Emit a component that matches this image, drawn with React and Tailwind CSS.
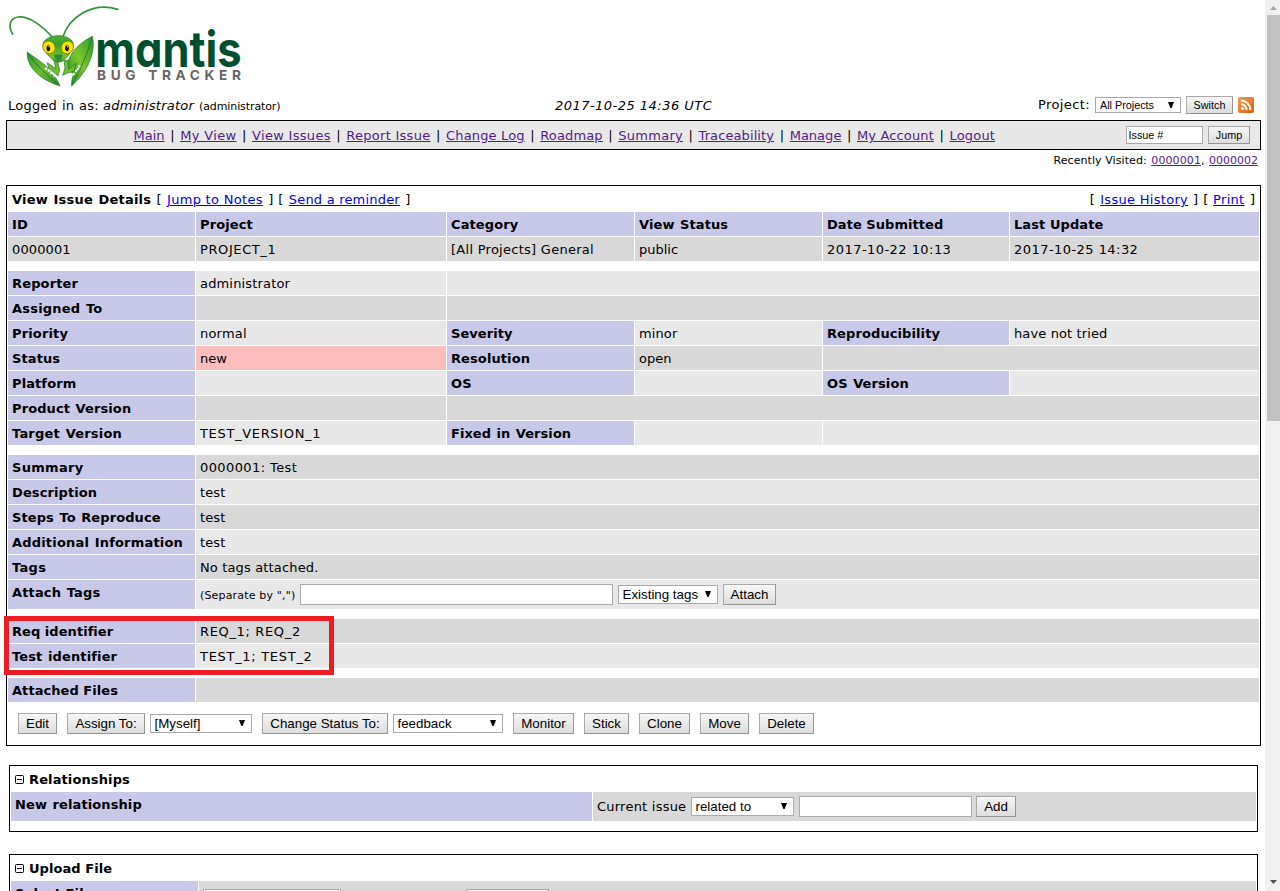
import React from "react";

const COLS = "grid grid-cols-[187px_250px_187px_187px_186px_249px] gap-px";
const D = "bg-[#d8d8d8]";
const L = "bg-[#e8e8e8]";
const C = "bg-[#c8c8e8]";

const SPAN = { 1: "col-span-1", 3: "col-span-3", 2: "col-span-2", 4: "col-span-4", 5: "col-span-5" };

function Cell({ bg, span = 1, t = "tracking-[0.12px]", children }) {
  return (
    <div className={`${bg} ${SPAN[span]} h-6 px-1 leading-[25px] whitespace-nowrap ${t}`}>
      {children}
    </div>
  );
}

function Label({ children, t = "tracking-[0.1px] [word-spacing:0.9px]" }) {
  return <Cell bg={C} t={`font-bold ${t}`}>{children}</Cell>;
}

function Button({ className = "", small, children }) {
  return (
    <button className={`shrink-0 border border-t-[#a9a9a9] border-l-[#a9a9a9] border-[#959595] bg-linear-to-b from-[#f6f6f6] to-[#dddddd] text-center whitespace-nowrap font-['Liberation_Sans',sans-serif] ${small ? "h-[18px] text-[10.8px] leading-[17px]" : "h-[21px] text-[13.333px] leading-[19px]"} ${className}`}>
      {children}
    </button>
  );
}

function Select({ className = "", small, children }) {
  return (
    <div className={`shrink-0 flex items-center justify-between border border-[#a9a9a9] bg-white pr-[6px] whitespace-nowrap font-['Liberation_Sans',sans-serif] ${small ? "h-[16px] text-[10.8px] leading-[14px] pl-1" : "h-[19px] text-[13.333px] leading-[17px] pl-[3.5px]"} ${className}`}>
      <span>{children}</span>
      <svg width="6" height="6" viewBox="0 0 6 6" className="shrink-0 -mt-px"><path d="M0 0h6L3.6 6H2.4z" fill="#000" /></svg>
    </div>
  );
}

function Input({ className = "" }) {
  return <div className={`shrink-0 border border-[#a9a9a9] bg-white ${className}`} />;
}

function Link({ children, visited, t = "" }) {
  return <a className={`underline ${t} ${visited ? "text-[#551a8b]" : "text-[#0000ee]"}`}>{children}</a>;
}

function Logo() {
  return (
    <svg width="260" height="90" viewBox="0 0 780 270" className="block">
      <defs>
        <linearGradient id="leaf" x1="0" y1="0" x2="1" y2="1">
          <stop offset="0" stopColor="#2c9636" />
          <stop offset="0.5" stopColor="#6dbb2b" />
          <stop offset="1" stopColor="#279034" />
        </linearGradient>
        <linearGradient id="leafRight" x1="1" y1="0" x2="0" y2="1">
          <stop offset="0" stopColor="#2c9636" />
          <stop offset="0.5" stopColor="#7cc62a" />
          <stop offset="1" stopColor="#1f8a30" />
        </linearGradient>
        <linearGradient id="head" x1="0" y1="0" x2="0" y2="1">
          <stop offset="0" stopColor="#4fae2f" />
          <stop offset="0.35" stopColor="#38a02f" />
          <stop offset="0.8" stopColor="#7cc62a" />
          <stop offset="1" stopColor="#2a8c32" />
        </linearGradient>
      </defs>
      <g fill="none" stroke="#2f9636" strokeLinecap="round">
        <path d="M158 113C128 78 88 48 55 51C30 54 23 77 38 102" strokeWidth="5" />
        <path d="M188 112C208 52 276 4 353 28" strokeWidth="5" />
      </g>
      <g stroke="#1c7330" strokeWidth="2" strokeLinejoin="round">
        <path d="M82 156C78 195 112 236 180 258C174 242 166 230 154 222C146 196 112 180 82 156Z" fill="url(#leaf)" />
        <path d="M277 109C287 150 272 205 215 258C214 244 216 234 221 224L202 203C203 160 240 128 277 109Z" fill="url(#leafRight)" />
        <path d="M161 180L168 206L142 188L146 204L174 228L179 210L173 186Z" fill="#6fbf2c" />
        <path d="M192 182L195 204L188 226L202 219L222 214L228 190L206 208L203 180Z" fill="#6fbf2c" />
      </g>
      <g fill="none" stroke="#12602a" strokeWidth="2">
        <path d="M84 160C108 196 142 226 174 252" />
        <path d="M276 112C264 160 240 210 217 252" />
      </g>
      <g fill="#fff">
        <circle cx="138" cy="206" r="3.5" /><circle cx="146" cy="212" r="3.5" /><circle cx="153" cy="219" r="3.5" /><circle cx="164" cy="227" r="4" />
        <circle cx="238" cy="199" r="3.5" /><circle cx="234" cy="207" r="3.5" /><circle cx="228" cy="213" r="3.5" /><circle cx="221" cy="222" r="3.5" />
      </g>
      <path d="M130 128C144 100 206 100 219 128C224 146 206 168 188 183Q175 190 163 183C144 168 124 146 130 128Z" fill="url(#head)" stroke="#1c7330" strokeWidth="2" />
      <path d="M162 166Q175 160 189 166Q186 178 175 182Q164 178 162 166Z" fill="#2c8a35" />
      <ellipse cx="147" cy="142" rx="18" ry="20" transform="rotate(-38 147 142)" fill="#ffe300" stroke="#6f7d1d" strokeWidth="2.5" />
      <ellipse cx="202" cy="142" rx="18" ry="20" transform="rotate(38 202 142)" fill="#ffe300" stroke="#6f7d1d" strokeWidth="2.5" />
      <ellipse cx="145" cy="145" rx="5.5" ry="9" fill="#111" />
      <ellipse cx="201" cy="145" rx="5.5" ry="9" fill="#111" />
      <circle cx="147" cy="140" r="2" fill="#fff" />
      <circle cx="203" cy="140" r="2" fill="#fff" />
      <text x="286" y="200" textLength="439" lengthAdjust="spacingAndGlyphs" fill="#00502f" className="font-['Inter',sans-serif] font-bold text-[148px] [font-feature-settings:'cv11']">mantis</text>
      <text x="291" y="241" textLength="432" lengthAdjust="spacing" fill="#6b6463" className="font-['Inter',sans-serif] font-bold text-[41px]">BUG TRACKER</text>
    </svg>
  );
}

function Toggle() {
  return (
    <svg width="9" height="9" viewBox="0 0 9 9" className="shrink-0 mr-[5px]"><rect x=".5" y=".5" width="8" height="8" rx="1" fill="#fff" stroke="#000" /><path d="M2 4.5h5" stroke="#000" /></svg>
  );
}

const MENU = [
  ["Main", ""],
  ["My View", "tracking-[0.35px]"],
  ["View Issues", "tracking-[0.3px]"],
  ["Report Issue", "tracking-[0.27px]"],
  ["Change Log", "tracking-[0.15px]"],
  ["Roadmap", "tracking-[0.14px]"],
  ["Summary", "tracking-[0.25px]"],
  ["Traceability", "tracking-[0.1px]"],
  ["Manage", "tracking-[0.02px]"],
  ["My Account", "tracking-[0.14px]"],
  ["Logout", "tracking-[0.18px]"],
];

export default function App() {
  return (
    <div className="flex w-[1280px] h-[891px] overflow-hidden bg-white text-black font-['DejaVu_Sans',sans-serif] text-[13px]">
      <div className="w-[1265px] h-[891px] overflow-hidden flex flex-col">
        <div className="h-[90px] shrink-0"><Logo /></div>
        <div className="grid grid-cols-[547px_300px_1fr] h-[30px] shrink-0 pl-2 items-center">
          <div className="whitespace-nowrap pt-[2px] flex items-baseline">
            <span className="w-[95px] tracking-[0.22px] [word-spacing:0.5px]">Logged in as:</span>
            <i className="w-[96px] tracking-[0.25px]">administrator</i>
            <span className="text-[11px] tracking-[-0.1px]">(administrator)</span>
          </div>
          <div className="italic whitespace-nowrap pt-[2px] tracking-[0.47px]">2017-10-25 14:36 UTC</div>
          <div className="flex items-center justify-end pr-[11px]">
            <span className="mr-[5px] tracking-[0.4px]">Project:</span>
            <Select small className="w-[86px] mr-[5px]">All Projects</Select>
            <Button small className="w-[47px] mr-[5px]">Switch</Button>
            <svg width="16" height="16" viewBox="0 0 16 16"><defs><linearGradient id="rss" x1="0" y1="0" x2="1" y2="1"><stop offset="0" stopColor="#f49a50" /><stop offset="1" stopColor="#d95f14" /></linearGradient></defs><rect width="16" height="16" rx="2" fill="url(#rss)" /><circle cx="4.5" cy="11.5" r="1.6" fill="#fff" /><path d="M3 7.3a5.7 5.7 0 0 1 5.7 5.7M3 3.6A9.4 9.4 0 0 1 12.4 13" fill="none" stroke="#fff" strokeWidth="2" /></svg>
          </div>
        </div>
        <div className="ml-[6px] w-[1255px] h-[30px] shrink-0 border border-black bg-[#e8e8e8] flex items-center">
          <div className="ml-[126.5px] pt-[2px] whitespace-nowrap flex">
            {MENU.map(([m, t], i) => (
              <React.Fragment key={m}>
                {i > 0 && <span className="w-[15.6px] text-center">|</span>}
                <Link visited t={t}>{m}</Link>
              </React.Fragment>
            ))}
          </div>
          <div className="ml-auto mr-[10px] flex items-center gap-[5px]">
            <div className="w-[77px] h-[18px] border border-[#a9a9a9] bg-white pl-[1.5px] font-['Liberation_Sans',sans-serif] text-[10.8px] leading-[17px]">Issue #</div>
            <Button small className="w-[42px]">Jump</Button>
          </div>
        </div>
        <div className="h-[35px] shrink-0 text-right pr-[7px] text-[11px] leading-[21px]">
          <span className="tracking-[0.08px]">Recently Visited:</span> <Link visited t="tracking-[0.1px] ml-px">0000001</Link>, <Link visited t="ml-px">0000002</Link>
        </div>

        <div className="relative ml-[6px] w-[1255px] h-[561px] shrink-0 border border-black px-px flex flex-col">
          <div className="h-[26px] shrink-0 flex justify-between px-1 leading-[27px] whitespace-pre">
            <div className="flex">
              <b className="w-[139px] tracking-[0.2px] [word-spacing:0.9px]">View Issue Details</b>
              <span className="w-4 text-center">[</span>
              <Link t="tracking-[0.3px]">Jump to Notes</Link>
              <span className="w-[26px] text-center [word-spacing:1px]">] [</span>
              <Link t="tracking-[0.2px]">Send a reminder</Link>
              <span className="w-4 text-center">]</span>
            </div>
            <div className="flex">
              <span className="w-4 text-center">[</span>
              <Link t="tracking-[0.3px]">Issue History</Link>
              <span className="w-[25px] text-center [word-spacing:1px]">] [</span>
              <Link t="tracking-[0.3px]">Print</Link>
              <span className="w-[10.5px] text-right">]</span>
            </div>
          </div>
          <div className={COLS}>
            <Label>ID</Label><Label t="tracking-[0.1px]">Project</Label><Label>Category</Label><Label>View Status</Label><Label t="tracking-[0.05px]">Date Submitted</Label><Label t="tracking-[0.08px]">Last Update</Label>
            <Cell bg={D}>0000001</Cell><Cell bg={D} t="tracking-[0.6px]">PROJECT_1</Cell><Cell bg={D} t="tracking-[0.27px]">[All Projects] General</Cell><Cell bg={D} t="">public</Cell><Cell bg={D} t="tracking-[0.45px]">2017-10-22 10:13</Cell><Cell bg={D} t="tracking-[0.45px]">2017-10-25 14:32</Cell>
          </div>
          <div className={`${COLS} mt-[10px]`}>
            <Label t="tracking-[0.15px]">Reporter</Label><Cell bg={L} t="tracking-[0.16px]">administrator</Cell><Cell bg={L} span={4} />
            <Label t="tracking-[0.2px] [word-spacing:1px]">Assigned To</Label><Cell bg={D} /><Cell bg={D} span={4} />
            <Label t="tracking-[0.15px]">Priority</Label><Cell bg={L} t="tracking-[0.2px]">normal</Cell><Label t="tracking-[0.05px]">Severity</Label><Cell bg={L}>minor</Cell><Label>Reproducibility</Label><Cell bg={L}>have not tried</Cell>
            <Label>Status</Label><Cell bg="bg-[#fcbdbd]" t="">new</Cell><Label>Resolution</Label><Cell bg={D} t="">open</Cell><Cell bg={D} span={2} />
            <Label>Platform</Label><Cell bg={L} /><Label>OS</Label><Cell bg={L} /><Label>OS Version</Label><Cell bg={L} />
            <Label>Product Version</Label><Cell bg={D} /><Cell bg={D} span={4} />
            <Label t="tracking-[0.2px] [word-spacing:1px]">Target Version</Label><Cell bg={L} t="tracking-[0.67px]">TEST_VERSION_1</Cell><Label t="tracking-[0.05px] [word-spacing:0.9px]">Fixed in Version</Label><Cell bg={L} /><Cell bg={L} span={2} />
          </div>
          <div className={`${COLS} mt-[10px]`}>
            <Label t="tracking-[0.3px]">Summary</Label><Cell bg={D} span={5} t="tracking-[0.4px]">0000001: Test</Cell>
            <Label>Description</Label><Cell bg={L} span={5}>test</Cell>
            <Label t="tracking-[0.08px] [word-spacing:1px]">Steps To Reproduce</Label><Cell bg={D} span={5}>test</Cell>
            <Label t="tracking-[0.18px] [word-spacing:1px]">Additional Information</Label><Cell bg={L} span={5}>test</Cell>
            <Label t="tracking-[0.3px]">Tags</Label><Cell bg={D} span={5} t="tracking-[0.15px]">No tags attached.</Cell>
            <div className="bg-[#c8c8e8] h-[29px] px-1 leading-[25px] font-bold tracking-[0.15px] [word-spacing:0.9px]">Attach Tags</div>
            <div className="bg-[#e8e8e8] col-span-5 h-[29px] pl-1 flex items-center">
              <span className="text-[11px] w-[100px] whitespace-nowrap pt-[3px] tracking-[0.17px]">(Separate by ",")</span>
              <Input className="w-[313px] h-[21px] mr-[5px]" />
              <Select className="w-[100px] mr-[5px]">Existing tags</Select>
              <Button className="w-[53px]">Attach</Button>
            </div>
          </div>
          <div className={`${COLS} mt-[10px]`}>
            <Label t="tracking-[0.05px]">Req identifier</Label><Cell bg={D} span={5} t="tracking-[0.65px]">REQ_1; REQ_2</Cell>
            <Label t="tracking-[0.13px] [word-spacing:0.9px]">Test identifier</Label><Cell bg={L} span={5} t="tracking-[0.7px]">TEST_1; TEST_2</Cell>
          </div>
          <div className={`${COLS} mt-[10px]`}>
            <Label t="tracking-[0.05px]">Attached Files</Label><Cell bg={D} span={5} />
          </div>
          <div className="flex items-center mt-[11px] pl-[10px] h-[21px]">
            <Button className="w-[39px] mr-[10px]">Edit</Button>
            <Button className="w-[78px] mr-[5px]">Assign To:</Button>
            <Select className="w-[102px] mr-[10px]">[Myself]</Select>
            <Button className="w-[126px] mr-[5px]">Change Status To:</Button>
            <Select className="w-[110px] mr-[10px]">feedback</Select>
            <Button className="w-[61px] mr-[10px]">Monitor</Button>
            <Button className="w-[45px] mr-[10px]">Stick</Button>
            <Button className="w-[51px] mr-[10px]">Clone</Button>
            <Button className="w-[49px] mr-[10px]">Move</Button>
            <Button className="w-[55px]">Delete</Button>
          </div>
          <div className="absolute left-[-3px] top-[430px] w-[330px] h-[59px] border-[5px] border-[#ed1c24]" />
        </div>

        <div className="ml-[9px] mt-[19px] w-[1249px] h-[67px] shrink-0 border border-black px-px">
          <div className="h-[26px] flex items-center pl-1 pt-px font-bold tracking-[0.12px]"><Toggle />Relationships</div>
          <div className="grid grid-cols-[581px_663px] gap-px">
            <div className="bg-[#c8c8e8] h-[29px] px-1 leading-[25px] font-bold tracking-[0.1px] [word-spacing:0.9px]">New relationship</div>
            <div className="bg-[#d8d8d8] h-[29px] pl-1 flex items-center">
              <span className="w-[94px] whitespace-nowrap tracking-[0.23px]">Current issue</span>
              <Select className="w-[103px] mr-[5px]">related to</Select>
              <Input className="w-[173px] h-[21px] mr-[4px]" />
              <Button className="w-[40px]">Add</Button>
            </div>
          </div>
        </div>

        <div className="ml-[9px] mt-[22px] w-[1249px] h-[90px] shrink-0 border border-black px-px">
          <div className="h-[26px] flex items-center pl-1 pt-px font-bold tracking-[0.05px]"><Toggle />Upload File</div>
          <div className="grid grid-cols-[187px_1057px] gap-px">
            <div className="bg-[#c8c8e8] h-[60px] px-1 leading-[25px] font-bold tracking-[0.1px]">Select File</div>
            <div className="bg-[#d8d8d8] h-[60px] pl-1 pt-2 flex items-start">
              <Input className="w-[138px] h-[21px] mr-[125px]" />
              <Button className="w-[83px]" />
            </div>
          </div>
        </div>
      </div>
      <div className="w-[15px] h-[891px] bg-[#f1f1f1] flex flex-col items-end">
        <div className="h-[15px] w-[13px] shrink-0 flex items-center justify-center"><svg width="7" height="4"><path d="M0 4L3.5 0L7 4z" fill="#a3a3a3" /></svg></div>
        <div className="w-[13px] h-[406px] bg-[#c1c1c1] shrink-0" />
        <div className="mt-auto h-[18px] w-[13px] shrink-0 flex items-center justify-center"><svg width="7" height="4"><path d="M0 0H7L3.5 4z" fill="#505050" /></svg></div>
      </div>
    </div>
  );
}
